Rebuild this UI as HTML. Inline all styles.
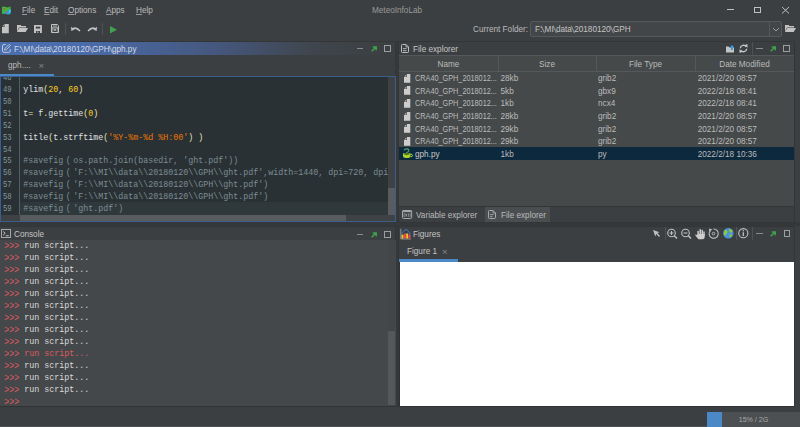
<!DOCTYPE html>
<html><head><meta charset="utf-8">
<style>
*{margin:0;padding:0;box-sizing:border-box}
html,body{width:800px;height:427px;overflow:hidden;background:#3c3f41;font-family:"Liberation Sans",sans-serif;color:#bbbbbb}
.a{position:absolute}
.t{position:absolute;white-space:pre;font-size:8.2px;line-height:10px}
.m{position:absolute;font-family:"Liberation Mono",monospace;font-size:8.33px;white-space:pre}
.u{text-decoration:underline;text-underline-offset:0.5px;text-decoration-color:#999}
.fw{display:inline-block;width:10px;text-align:center}
.bs{display:inline-block;transform:translateY(0.9px) scaleY(1.22) skewX(16deg)}
.p{display:inline-block;transform:translateY(1.1px) scaleY(1.28);transform-origin:50% 58%}
svg{position:absolute;overflow:visible}
</style></head><body>
<svg style="left:2px;top:5.5px" width="8.5" height="8.5" viewBox="0 0 8.5 8.5"><path d="M0 1 Q2 0 4 1 Q6 2 8.5 0.6 V7.8 Q6 8.8 4 7.8 Q2 7 0 8Z" fill="#3db63f"/><path d="M1.8 7.2 Q4 5.5 5.5 4.8 Q7 3.8 8.5 2.8 V7.8 Q6 8.8 4 7.8 Q3 7.3 1.8 7.6Z" fill="#2d9be0"/><path d="M8.5 2.8 V6 L6.5 6.5Z" fill="#4fd0f0"/><circle cx="2.3" cy="2.8" r="0.9" fill="#d04a3a"/><circle cx="4.6" cy="6" r="0.8" fill="#e03a50"/></svg>
<div class="t" style="left:22px;top:6px;"><span class="u">F</span>ile</div>
<div class="t" style="left:44px;top:6px;"><span class="u">E</span>dit</div>
<div class="t" style="left:68px;top:6px;"><span class="u">O</span>ptions</div>
<div class="t" style="left:106px;top:6px;"><span class="u">A</span>pps</div>
<div class="t" style="left:136px;top:6px;"><span class="u">H</span>elp</div>
<div class="t" style="left:372px;top:6px;color:#9a9a9a;">MeteoInfoLab</div>
<div class="a" style="left:727px;top:9px;width:7px;height:1px;background:#c0c0c0"></div>
<div class="a" style="left:754px;top:7px;width:7px;height:6px;border:1px solid #c0c0c0"></div>
<svg style="left:782px;top:7px" width="7" height="7"><path d="M0 0L7 6.5M7 0L0 6.5" stroke="#c0c0c0" stroke-width="1"/></svg>
<svg style="left:2.2px;top:24.1px" width="7" height="9.2"><path d="M2.6 0H6.8V9.2H0V2.9H2.6Z" fill="#c2c2c2"/><path d="M0.4 2.3L2.2 0.5V2.3Z" fill="#c2c2c2"/></svg>
<svg style="left:17px;top:25px" width="11" height="7"><path d="M0 0H3.5L4.5 1H9V2.5H2L0 7Z" fill="#c2c2c2"/><path d="M2.3 3H11L8.7 7H0Z" fill="#c2c2c2"/></svg>
<svg style="left:34.1px;top:24.9px" width="8" height="8"><path d="M0 0H7.9V8H0Z" fill="#c2c2c2"/><rect x="1.8" y="1.7" width="4.4" height="1.8" fill="#3c3f41"/><rect x="2" y="6" width="4" height="2" fill="#3c3f41"/><rect x="2.9" y="6.6" width="1.7" height="1" fill="#c2c2c2"/></svg>
<svg style="left:51px;top:24.4px" width="8" height="9"><path d="M0.5 0.5H6.3L7.5 1.7V8.5H0.5Z" stroke="#c2c2c2" stroke-width="1" fill="none"/><rect x="1.8" y="1.6" width="4.2" height="0.9" fill="#c2c2c2"/><rect x="1" y="3.4" width="6" height="1" fill="#c2c2c2"/><rect x="1.5" y="3.9" width="0.6" height="4" fill="#c2c2c2"/><rect x="5.9" y="3.9" width="0.6" height="4" fill="#c2c2c2"/><rect x="2.7" y="5.2" width="2.4" height="1.5" fill="#c2c2c2"/></svg>
<div class="a" style="left:65px;top:23px;width:1px;height:12px;background:#4f5254"></div>
<svg style="left:70.8px;top:26px" width="10" height="6"><path d="M1.5 3 Q5 0.5 9 5" stroke="#c2c2c2" stroke-width="1.5" fill="none"/><path d="M0 0.8L0.3 5L3.6 3.6Z" fill="#c2c2c2"/></svg>
<svg style="left:87px;top:26px" width="10" height="6"><path d="M8.5 3 Q5 0.5 1 5" stroke="#c2c2c2" stroke-width="1.5" fill="none"/><path d="M10 0.8L9.7 5L6.4 3.6Z" fill="#c2c2c2"/></svg>
<div class="a" style="left:102px;top:23px;width:1px;height:12px;background:#4f5254"></div>
<svg style="left:109.5px;top:25.5px" width="7" height="7.5"><path d="M0 0L7 3.75L0 7.5Z" fill="#42a04e"/></svg>
<div class="t" style="left:473px;top:25px;">Current Folder:</div>
<div class="a" style="left:530px;top:21px;width:252px;height:16px;border:1px solid #56595b;border-radius:2px;background:#434648"></div>
<div class="a" style="left:769px;top:22px;width:1px;height:14px;background:#56595b"></div>
<svg style="left:772.5px;top:27.5px" width="6" height="3.5"><path d="M0 0L3 3L6 0" stroke="#a0a0a0" stroke-width="1" fill="none"/></svg>
<div class="t" style="left:535px;top:25px;color:#c4c4c4;">F:<span class=bs>\</span>MI<span class=bs>\</span>data<span class=bs>\</span>20180120<span class=bs>\</span>GPH</div>
<svg style="left:785px;top:25px" width="11" height="7"><path d="M0 0H3.5L4.5 1H9V2.5H2L0 7Z" fill="#c2c2c2"/><path d="M2.3 3H11L8.7 7H0Z" fill="#c2c2c2"/></svg>
<div class="a" style="left:0;top:222px;width:800px;height:4px;background:#35383a"></div>
<div class="a" style="left:396px;top:41px;width:2.5px;height:366px;background:#36393b"></div>
<div class="a" style="left:0;top:41px;width:396px;height:181px;background:#3c3f41;border-right:1px solid #333537;border-top:1px solid #333537"></div>
<div class="a" style="left:0;top:42px;width:395px;height:13px;background:linear-gradient(90deg,#4b6eaf 0%,#4a6cab 20%,#45577d 55%,#3f454c 80%,#3c3f41 100%)"></div>
<svg style="left:1.5px;top:44.3px" width="9" height="9"><path d="M3.8 0.5H2Q0.5 0.5 0.5 2V6.9Q0.5 8.3 2 8.3H6.8Q8.2 8.3 8.2 6.9V5" stroke="#c5cde0" stroke-width="0.95" fill="none"/><path d="M2.6 6.1L2.9 4.6L6.8 0.7Q7.3 0.3 7.8 0.8L8.1 1.1Q8.5 1.6 8.1 2L4.2 5.8Z" stroke="#c5cde0" stroke-width="0.9" fill="none"/></svg>
<div class="t" style="left:14px;top:45px;color:#d4d9e3;">F:<span class=bs>\</span>MI<span class=bs>\</span>data<span class=bs>\</span>20180120<span class=bs>\</span>GPH<span class=bs>\</span>gph.py</div>
<div class="a" style="left:356.5px;top:48px;width:6.5px;height:1.2px;background:#8a8a8a"></div>
<svg style="left:370.8px;top:45.5px" width="6" height="6"><path d="M0.7 5.3L5 1M1.8 0.9H5.2V4.3" stroke="#3ea44b" stroke-width="1.5" fill="none"/></svg>
<div class="a" style="left:384px;top:45px;width:6.5px;height:6.5px;border:1px solid #9e9e9e"></div>
<div class="t" style="left:8px;top:61px;">gph....</div>
<div class="t" style="left:38.5px;top:61px;color:#8a8a8a;font-size:9.6px">×</div>
<div class="a" style="left:0;top:74px;width:54px;height:2px;background:#4a88c7"></div>
<div class="a" style="left:0;top:76px;width:395.5px;height:146px;border:1px solid #3b5e8c;background:#293134"></div>
<div class="a" style="left:1px;top:77px;width:393.5px;height:144px;background:#293134"></div>
<div class="a" style="left:20px;top:202px;width:368px;height:12.5px;background:#2f393c"></div>
<div class="a" style="left:19px;top:77px;width:1px;height:138px;background:#52605f"></div>
<div class="a" style="left:388px;top:77px;width:6.5px;height:144px;background:#3e4244"></div>
<div class="a" style="left:388px;top:188px;width:6.5px;height:26.5px;background:#595c5e"></div>
<div class="a" style="left:1px;top:215px;width:387px;height:6px;background:#3e4244"></div>
<div class="a" style="left:19.5px;top:215px;width:326.5px;height:6px;background:#595c5e"></div>
<div class="a" style="left:1px;top:77px;width:387px;height:138px;overflow:hidden">
<div class="m" style="left:1.6px;top:-4.1px;line-height:11.94px;color:#81969a;transform:scaleX(0.87);transform-origin:0 0">48
49
50
51
52
53
54
55
56
57
58
59</div>
<div class="m" style="left:22.3px;top:-4.1px;line-height:11.94px;color:#e0e2e4">
ylim<span style="color:#e8e2b7">(</span><span style="color:#ffcd22">20</span>, <span style="color:#ffcd22">60</span><span style="color:#e8e2b7">)</span>

t<span style="color:#e8e2b7">=</span> f<span style="color:#e8e2b7">.</span>gettime<span style="color:#e8e2b7">(</span><span style="color:#ffcd22">0</span><span style="color:#e8e2b7">)</span>

title<span style="color:#e8e2b7">(</span>t<span style="color:#e8e2b7">.</span>strftime<span style="color:#e8e2b7">(</span><span style="color:#ec7600">'%Y-%m-%d %H:00'</span><span style="color:#e8e2b7">)</span> <span style="color:#e8e2b7">)</span>

<span style="color:#7d8c93">#savefig<span class="fw">(</span>os.path.join(basedir, 'ght.pdf'))</span>
<span style="color:#7d8c93">#savefig<span class="fw">(</span>'F:\\MI\\data\\20180120\\GPH\\ght.pdf',width=1440, dpi=720, dpi</span>
<span style="color:#7d8c93">#savefig<span class="fw">(</span>'F:\\MI\\data\\20180120\\GPH\\ght.pdf')</span>
<span style="color:#7d8c93">#savefig<span class="fw">(</span>'F:\\MI\\data\\20180120\\GPH\\ght.pdf')</span>
<span style="color:#7d8c93">#savefig<span class="fw">(</span>'ght.pdf')</span></div>
</div>
<div class="a" style="left:0;top:226px;width:396px;height:181px;background:#3c3f41;border-right:1px solid #333537;border-top:1px solid #333537"></div>
<svg style="left:1px;top:229px" width="10" height="9"><rect x="0.5" y="0.5" width="9" height="8" stroke="#a8a8a8" fill="none"/><path d="M2.2 2.5L4.2 4.3L2.2 6.1M4.8 6.8H7.8" stroke="#d0d0d0" stroke-width="0.9" fill="none"/></svg>
<div class="t" style="left:14px;top:230px;color:#c4c4c4;">Console</div>
<div class="a" style="left:356.5px;top:234px;width:6.5px;height:1.2px;background:#8a8a8a"></div>
<svg style="left:370.8px;top:231.5px" width="6" height="6"><path d="M0.7 5.3L5 1M1.8 0.9H5.2V4.3" stroke="#3ea44b" stroke-width="1.5" fill="none"/></svg>
<div class="a" style="left:384px;top:231px;width:6.5px;height:6.5px;border:1px solid #9e9e9e"></div>
<div class="a" style="left:0;top:240px;width:395.5px;height:166.3px;background:#45484a"></div>
<div class="a" style="left:0;top:406.3px;width:396px;height:1px;background:#313335"></div>
<div class="a" style="left:388px;top:240px;width:6.5px;height:166px;background:#434648"></div>
<div class="a" style="left:388px;top:330.5px;width:6.5px;height:74px;background:#55585a"></div>
<div class="m" style="left:4.3px;top:241.1px;line-height:11.98px;color:#dadada"><span style="color:#dc5a5f"><span class=p>&gt;&gt;&gt;</span> </span>run script...
<span style="color:#dc5a5f"><span class=p>&gt;&gt;&gt;</span> </span>run script...
<span style="color:#dc5a5f"><span class=p>&gt;&gt;&gt;</span> </span>run script...
<span style="color:#dc5a5f"><span class=p>&gt;&gt;&gt;</span> </span>run script...
<span style="color:#dc5a5f"><span class=p>&gt;&gt;&gt;</span> </span>run script...
<span style="color:#dc5a5f"><span class=p>&gt;&gt;&gt;</span> </span>run script...
<span style="color:#dc5a5f"><span class=p>&gt;&gt;&gt;</span> </span>run script...
<span style="color:#dc5a5f"><span class=p>&gt;&gt;&gt;</span> </span>run script...
<span style="color:#dc5a5f"><span class=p>&gt;&gt;&gt;</span> </span>run script...
<span style="color:#dc5a5f"><span class=p>&gt;&gt;&gt;</span> run script...</span>
<span style="color:#dc5a5f"><span class=p>&gt;&gt;&gt;</span> </span>run script...
<span style="color:#dc5a5f"><span class=p>&gt;&gt;&gt;</span> </span>run script...
<span style="color:#dc5a5f"><span class=p>&gt;&gt;&gt;</span> </span>run script...
<span style="color:#dc5a5f"><span class=p>&gt;&gt;&gt;</span></span></div>
<div class="a" style="left:398px;top:41px;width:397px;height:182px;background:#3c3f41;border:1px solid #333537"></div>
<svg style="left:401px;top:44px" width="8" height="9"><path d="M5 0.5H1.5Q0.5 0.5 0.5 1.5V7.8Q0.5 8.5 1.5 8.5H6.5Q7.5 8.5 7.5 7.8V3Z" stroke="#bdbdbd" stroke-width="1" fill="none"/><path d="M5 0.5V3H7.5" stroke="#bdbdbd" stroke-width="0.8" fill="none"/><path d="M2 4.6H5.5M2 6.6H5.5" stroke="#bdbdbd" stroke-width="0.9"/></svg>
<div class="t" style="left:413px;top:45px;color:#c4c4c4;">File explorer</div>
<svg style="left:725.5px;top:44.5px" width="8" height="7.5"><path d="M0 1.5H2.5L3.5 2.5H8V7.5H0Z" fill="#c4c4c4"/><path d="M6 0L8.3 2.5H7V5H5V2.5H3.7Z" fill="#3d9be0"/></svg>
<svg style="left:739px;top:44px" width="9" height="9"><path d="M1.3 4.3A3.2 3.2 0 0 1 7.2 2.8M7.7 4.7A3.2 3.2 0 0 1 1.8 6.2" stroke="#c4c4c4" stroke-width="1.4" fill="none"/><path d="M5.4 1.2L8.6 3.7L8.4 0Z M3.6 7.8L0.4 5.3L0.6 9Z" fill="#c4c4c4"/></svg>
<div class="a" style="left:751.5px;top:42px;width:1px;height:13px;background:#4f5254"></div>
<div class="a" style="left:756px;top:48px;width:6.5px;height:1.2px;background:#8a8a8a"></div>
<svg style="left:770px;top:45.5px" width="6" height="6"><path d="M0.7 5.3L5 1M1.8 0.9H5.2V4.3" stroke="#3ea44b" stroke-width="1.5" fill="none"/></svg>
<div class="a" style="left:783px;top:45px;width:7px;height:7px;border:1px solid #9e9e9e"></div>
<div class="a" style="left:399px;top:55px;width:395px;height:151px;background:#45494a"></div>
<div class="a" style="left:399px;top:55px;width:395px;height:17px;background:#45494a;border-top:1px solid #55585a;border-bottom:1px solid #55585a"></div>
<div class="a" style="left:498px;top:55px;width:1px;height:16px;background:#55585a"></div>
<div class="a" style="left:596px;top:55px;width:1px;height:16px;background:#55585a"></div>
<div class="a" style="left:695px;top:55px;width:1px;height:16px;background:#55585a"></div>
<div class="t" style="left:399px;top:60px;width:99px;text-align:center">Name</div>
<div class="t" style="left:498px;top:60px;width:98px;text-align:center">Size</div>
<div class="t" style="left:596px;top:60px;width:99px;text-align:center">File Type</div>
<div class="t" style="left:695px;top:60px;width:99px;text-align:center">Date Modified</div>
<div class="a" style="left:399px;top:147px;width:395px;height:13px;background:#0d293e"></div>
<svg style="left:403.8px;top:73.7px" width="6.5" height="9"><path d="M3 0H6.3V8.8H0V3.1H3Z" fill="#cdcdcd"/><path d="M0.4 2.4L2.4 0.4V2.4Z" fill="#cdcdcd"/></svg>
<div class="t" style="left:415px;top:74.2px;transform:scaleX(0.89);transform-origin:0 0">CRA40_GPH_2018012...</div>
<div class="t" style="left:500.5px;top:74.2px;">28kb</div>
<div class="t" style="left:598px;top:74.2px;">grib2</div>
<div class="t" style="left:697.7px;top:74.2px;">2021/2/20 08:57</div>
<svg style="left:403.8px;top:86.3px" width="6.5" height="9"><path d="M3 0H6.3V8.8H0V3.1H3Z" fill="#cdcdcd"/><path d="M0.4 2.4L2.4 0.4V2.4Z" fill="#cdcdcd"/></svg>
<div class="t" style="left:415px;top:86.8px;transform:scaleX(0.89);transform-origin:0 0">CRA40_GPH_2018012...</div>
<div class="t" style="left:500.5px;top:86.8px;">5kb</div>
<div class="t" style="left:598px;top:86.8px;">gbx9</div>
<div class="t" style="left:697.7px;top:86.8px;">2022/2/18 08:41</div>
<svg style="left:403.8px;top:98.9px" width="6.5" height="9"><path d="M3 0H6.3V8.8H0V3.1H3Z" fill="#cdcdcd"/><path d="M0.4 2.4L2.4 0.4V2.4Z" fill="#cdcdcd"/></svg>
<div class="t" style="left:415px;top:99.4px;transform:scaleX(0.89);transform-origin:0 0">CRA40_GPH_2018012...</div>
<div class="t" style="left:500.5px;top:99.4px;">1kb</div>
<div class="t" style="left:598px;top:99.4px;">ncx4</div>
<div class="t" style="left:697.7px;top:99.4px;">2022/2/18 08:41</div>
<svg style="left:403.8px;top:111.5px" width="6.5" height="9"><path d="M3 0H6.3V8.8H0V3.1H3Z" fill="#cdcdcd"/><path d="M0.4 2.4L2.4 0.4V2.4Z" fill="#cdcdcd"/></svg>
<div class="t" style="left:415px;top:112.0px;transform:scaleX(0.89);transform-origin:0 0">CRA40_GPH_2018012...</div>
<div class="t" style="left:500.5px;top:112.0px;">28kb</div>
<div class="t" style="left:598px;top:112.0px;">grib2</div>
<div class="t" style="left:697.7px;top:112.0px;">2021/2/20 08:57</div>
<svg style="left:403.8px;top:124.1px" width="6.5" height="9"><path d="M3 0H6.3V8.8H0V3.1H3Z" fill="#cdcdcd"/><path d="M0.4 2.4L2.4 0.4V2.4Z" fill="#cdcdcd"/></svg>
<div class="t" style="left:415px;top:124.6px;transform:scaleX(0.89);transform-origin:0 0">CRA40_GPH_2018012...</div>
<div class="t" style="left:500.5px;top:124.6px;">29kb</div>
<div class="t" style="left:598px;top:124.6px;">grib2</div>
<div class="t" style="left:697.7px;top:124.6px;">2021/2/20 08:57</div>
<svg style="left:403.8px;top:136.7px" width="6.5" height="9"><path d="M3 0H6.3V8.8H0V3.1H3Z" fill="#cdcdcd"/><path d="M0.4 2.4L2.4 0.4V2.4Z" fill="#cdcdcd"/></svg>
<div class="t" style="left:415px;top:137.2px;transform:scaleX(0.89);transform-origin:0 0">CRA40_GPH_2018012...</div>
<div class="t" style="left:500.5px;top:137.2px;">29kb</div>
<div class="t" style="left:598px;top:137.2px;">grib2</div>
<div class="t" style="left:697.7px;top:137.2px;">2021/2/20 08:57</div>
<svg style="left:402px;top:147.2px" width="11" height="12"><path d="M1.9 3.3Q3 1.6 5.2 1.9Q7.2 2.3 6.8 3.9Q6.3 5.1 4.8 5.5Q4.2 6.1 4.6 7.3" stroke="#55aa68" stroke-width="1.15" fill="none"/><path d="M1 6.3H8.5V9Q8.5 11 4.75 11Q1 11 1 9Z" fill="#a6d42c"/><ellipse cx="4.75" cy="6.9" rx="2.9" ry="0.75" fill="#2c4a2c"/><path d="M8.5 7.2Q10.6 7.2 10.6 8.5Q10.6 9.8 8.5 9.8" stroke="#a6d42c" stroke-width="1" fill="none"/></svg>
<div class="t" style="left:415px;top:149.8px;color:#c8c8c8;">gph.py</div>
<div class="t" style="left:500.5px;top:149.8px;">1kb</div>
<div class="t" style="left:598px;top:149.8px;">py</div>
<div class="t" style="left:697.7px;top:149.8px;">2022/2/18 10:36</div>
<div class="a" style="left:399px;top:206px;width:395px;height:1px;background:#333537"></div>
<div class="a" style="left:484.5px;top:207px;width:65.5px;height:15px;background:#4a4e50"></div>
<svg style="left:402px;top:210px" width="10" height="9"><rect x="0.5" y="0.5" width="9.2" height="8" rx="1" stroke="#a8a8a8" stroke-width="1" fill="none"/><rect x="0.5" y="0.5" width="9.2" height="1.6" fill="#a8a8a8"/><path d="M2.6 3.4H2V6.8H2.6M7.6 3.4H8.2V6.8H7.6M3.3 3.6L5 6.6M5 3.6L3.3 6.6M6.4 3.4V6.8" stroke="#a8a8a8" stroke-width="0.7" fill="none"/></svg>
<div class="t" style="left:416px;top:210.5px;">Variable explorer</div>
<svg style="left:488px;top:210px" width="8" height="9"><path d="M5 0.5H1.5Q0.5 0.5 0.5 1.5V7.8Q0.5 8.5 1.5 8.5H6.5Q7.5 8.5 7.5 7.8V3Z" stroke="#a8a8a8" stroke-width="1" fill="none"/><path d="M5 0.5V3H7.5" stroke="#a8a8a8" stroke-width="0.8" fill="none"/><path d="M2 4.6H5.5M2 6.6H4.5" stroke="#a8a8a8" stroke-width="0.9"/></svg>
<div class="t" style="left:501px;top:210.5px;">File explorer</div>
<div class="a" style="left:398px;top:226px;width:397px;height:181px;background:#3c3f41;border:1px solid #333537"></div>
<svg style="left:399.5px;top:227.5px" width="12" height="12"><path d="M0.8 0.8V11H10.8" stroke="#9a9a9a" stroke-width="0.9" fill="none"/><rect x="1.5" y="6.6" width="2" height="3.9" fill="#f5c526"/><rect x="4" y="5.5" width="1.9" height="5" fill="#f0455a"/><rect x="6.2" y="5.5" width="2" height="5" fill="#f5c526"/><rect x="8.6" y="6.6" width="1.9" height="3.9" fill="#f0455a"/><path d="M1.5 5.8C2.8 4.8 4 1.7 6.1 1.7C8.2 1.7 9.2 4.8 10.6 6.2" stroke="#3d80d8" stroke-width="1" fill="none"/></svg>
<div class="t" style="left:413px;top:230px;color:#c4c4c4;">Figures</div>
<svg style="left:653px;top:230px" width="7" height="7"><path d="M0 0L6.5 2.3L4.3 3L7 6L6 7L3.2 4L2.3 6.5Z" fill="#c0c0c0"/></svg>
<div class="a" style="left:664.5px;top:227px;width:1px;height:13px;background:#4f5254"></div>
<svg style="left:666px;top:228px" width="12" height="11"><circle cx="5.5" cy="5" r="3.8" stroke="#c0c0c0" stroke-width="1.1" fill="none"/><path d="M8.3 7.8L11 10.5" stroke="#c0c0c0" stroke-width="1.5"/><path d="M3.6 5H7.4M5.5 3.1V6.9" stroke="#c0c0c0" stroke-width="1.1"/></svg>
<svg style="left:680px;top:228px" width="12" height="11"><circle cx="5.5" cy="5" r="3.8" stroke="#c0c0c0" stroke-width="1.1" fill="none"/><path d="M8.3 7.8L11 10.5" stroke="#c0c0c0" stroke-width="1.5"/><path d="M3.6 5H7.4" stroke="#c0c0c0" stroke-width="1.1"/></svg>
<svg style="left:695.4px;top:228.6px" width="10" height="11"><rect x="2.4" y="1.8" width="1.5" height="6" rx="0.7" fill="#cdcdcd"/><rect x="4.5" y="0" width="1.5" height="6" rx="0.7" fill="#cdcdcd"/><rect x="6.5" y="0.8" width="1.5" height="6" rx="0.7" fill="#cdcdcd"/><rect x="8.3" y="2.3" width="1.4" height="5" rx="0.7" fill="#cdcdcd"/><path d="M2.4 5H9.7V8Q9.7 10.3 7.5 10.3H4.5Q3.5 10.3 2.8 9.4L0.2 6.2Q0 5.6 0.6 5.4Q1.2 5.3 2.4 6.6Z" fill="#cdcdcd"/></svg>
<svg style="left:708px;top:227.8px" width="11" height="11"><path d="M2.2 2.6A4.6 4.6 0 1 0 5.5 1" stroke="#c0c0c0" stroke-width="1.1" fill="none"/><path d="M1 0.5L4.2 1.5L1.5 4Z" fill="#c0c0c0"/><circle cx="5.5" cy="5.6" r="1.3" stroke="#c0c0c0" stroke-width="0.9" fill="none"/></svg>
<svg style="left:722.5px;top:228.3px" width="11" height="11"><circle cx="5.3" cy="5.2" r="5.2" fill="#4a92dc"/><path d="M1.2 2.5C2.5 1.5 4 2 4.5 3.5C5 5 3 5.5 2.8 7C2.6 8 1.5 8 0.8 6.5Z" fill="#8dc63f"/><path d="M6 0.6C7 1.5 8.5 1.3 9.5 2.5C10 4 8.5 5 7.5 4.5C6.5 4 6 3 6 0.6Z" fill="#8dc63f"/><path d="M6.5 6.5C7.5 6 9 6.5 9 7.5C8.5 9 7.5 9.5 6.8 9C6.5 8 6.2 7.5 6.5 6.5Z" fill="#8dc63f"/></svg>
<div class="a" style="left:735.5px;top:227px;width:1px;height:13px;background:#4f5254"></div>
<svg style="left:738px;top:228.3px" width="11" height="11"><circle cx="5.3" cy="5.2" r="4.6" stroke="#c0c0c0" stroke-width="1.1" fill="none"/><path d="M5.3 4.3V8" stroke="#c0c0c0" stroke-width="1.3"/><circle cx="5.3" cy="2.7" r="0.7" fill="#c0c0c0"/></svg>
<div class="a" style="left:751.8px;top:227px;width:1px;height:13px;background:#4f5254"></div>
<div class="a" style="left:756px;top:233.3px;width:6.5px;height:1.2px;background:#8a8a8a"></div>
<svg style="left:770px;top:231px" width="6" height="6"><path d="M0.7 5.3L5 1M1.8 0.9H5.2V4.3" stroke="#3ea44b" stroke-width="1.5" fill="none"/></svg>
<div class="a" style="left:783.5px;top:230.2px;width:6.5px;height:6.8px;border:1px solid #9e9e9e"></div>
<div class="a" style="left:399px;top:240px;width:395px;height:22px;background:#3c3f41"></div>
<div class="t" style="left:407px;top:247px;color:#c4c4c4;">Figure 1</div>
<div class="t" style="left:442px;top:247px;color:#8a8a8a;font-size:9.6px">×</div>
<div class="a" style="left:399px;top:259px;width:59px;height:2.5px;background:#4a88c7"></div>
<div class="a" style="left:399px;top:261.5px;width:395px;height:145.5px;background:#2f3133"></div>
<div class="a" style="left:400px;top:262px;width:394px;height:144.2px;background:#ffffff"></div>
<div class="a" style="left:0;top:426px;width:800px;height:1px;background:#4e5153"></div>
<div class="a" style="left:707px;top:412px;width:93px;height:15px;background:#4d5052"></div>
<div class="a" style="left:707px;top:412px;width:14.5px;height:15px;background:#4a88c7"></div>
<div class="t" style="left:707px;top:414.8px;color:#a8a8a8;width:93px;text-align:center;font-size:7.1px">15% / 2G</div>
</body></html>
